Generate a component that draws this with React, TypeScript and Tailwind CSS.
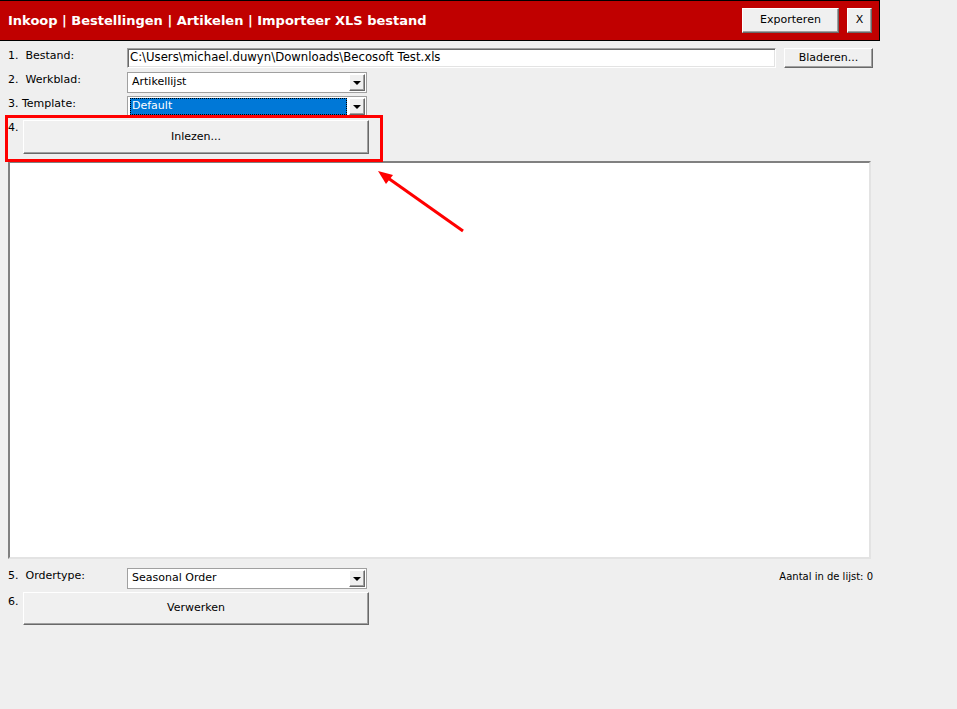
const raised =
  "border border-t-white border-l-white border-r-[#696969] border-b-[#696969] shadow-[inset_-1px_-1px_0_#a0a0a0] bg-[#f0f0f0]";
const sunken =
  "border border-t-[#a0a0a0] border-l-[#a0a0a0] border-r-white border-b-white shadow-[inset_1px_1px_0_#696969,inset_-1px_-1px_0_#e3e3e3] bg-white";

function Btn({ label, className }: { label: string; className: string }) {
  return (
    <button className={`${raised} ${className} flex items-center justify-center text-[11px] text-black`}>
      {label}
    </button>
  );
}

function Select({ value, focused }: { value: string; focused?: boolean }) {
  return (
    <div className="flex h-[21px] w-[240px] border border-[#a0a0a0] bg-white p-[1px]">
      <div className="flex flex-1 items-center pl-[1px] pr-[2px]">
        {focused ? (
          <div className="flex h-[17px] w-full items-center border border-dotted border-black bg-[#0078d7] pl-[1px] text-white">
            {value}
          </div>
        ) : (
          <span className="pl-[2px]">{value}</span>
        )}
      </div>
      <div className={`${raised} flex w-[16px] items-center justify-center`}>
        <div className="h-0 w-0 border-x-[4px] border-t-[4px] border-x-transparent border-t-black" />
      </div>
    </div>
  );
}

function Label({ text }: { text: string }) {
  return <div className="w-[119px] whitespace-pre pt-[1px] leading-[14px]">{text}</div>;
}

export default function App() {
  return (
    <div className="relative min-h-[709px] w-[957px] bg-[#efefef] font-['DejaVu_Sans',Verdana,sans-serif] text-[11px] text-black">
      <header className="flex h-[41px] w-[880px] items-center justify-between border-y border-r border-black bg-[#c00000] pl-[8px] pr-[7px]">
        <h1 className="text-[13px] font-bold text-white">
          Inkoop | Bestellingen | Artikelen | Importeer XLS bestand
        </h1>
        <div className="flex gap-[8px]">
          <Btn label="Exporteren" className="h-[25px] w-[97px]" />
          <Btn label="X" className="h-[25px] w-[25px]" />
        </div>
      </header>

      <div className="pl-[8px]">
        <div className="mt-[7px] flex h-[20px] items-start">
          <Label text={"1.  Bestand:"} />
          <div className={`${sunken} flex h-[20px] w-[649px] items-center pl-[2px] text-[11.7px]`}>
            C:\Users\michael.duwyn\Downloads\Becosoft Test.xls
          </div>
          <Btn label="Bladeren..." className="ml-[8px] h-[20px] w-[89px]" />
        </div>

        <div className="mt-[4px] flex items-start">
          <Label text={"2.  Werkblad:"} />
          <Select value="Artikellijst" />
        </div>

        <div className="mt-[3px] flex items-start">
          <Label text={"3. Template:"} />
          <Select value="Default" focused />
        </div>

        <div className="mt-[3px] flex items-start">
          <div className="w-[15px] pt-[1px] leading-[14px]">4.</div>
          <Btn label="Inlezen..." className="h-[34px] w-[346px]" />
        </div>

        <div className="mt-[7px] h-[398px] w-[863px] border-2 border-t-[#808080] border-l-[#808080] border-r-[#e3e3e3] border-b-[#e3e3e3] bg-white" />

        <div className="mt-[9px] flex items-start">
          <Label text={"5.  Ordertype:"} />
          <Select value="Seasonal Order" />
          <div className="ml-auto mr-[84px] pt-[1px] text-[10px]">Aantal in de lijst: 0</div>
        </div>

        <div className="mt-[3px] flex items-start">
          <div className="w-[15px] pt-[3px] leading-[14px]">6.</div>
          <Btn label="Verwerken" className="h-[33px] w-[346px]" />
        </div>
      </div>

      {/* annotation overlay */}
      <div className="pointer-events-none absolute left-[5px] top-[115px] h-[47px] w-[378px] border-[3px] border-[#ff0000]" />
      <svg className="pointer-events-none absolute left-[370px] top-[165px]" width="100" height="72" viewBox="0 0 100 72">
        <line x1="93" y1="66" x2="18" y2="13" stroke="#ff0000" strokeWidth="3" />
        <polygon points="8,6 23,10 16,19" fill="#ff0000" />
      </svg>
    </div>
  );
}
